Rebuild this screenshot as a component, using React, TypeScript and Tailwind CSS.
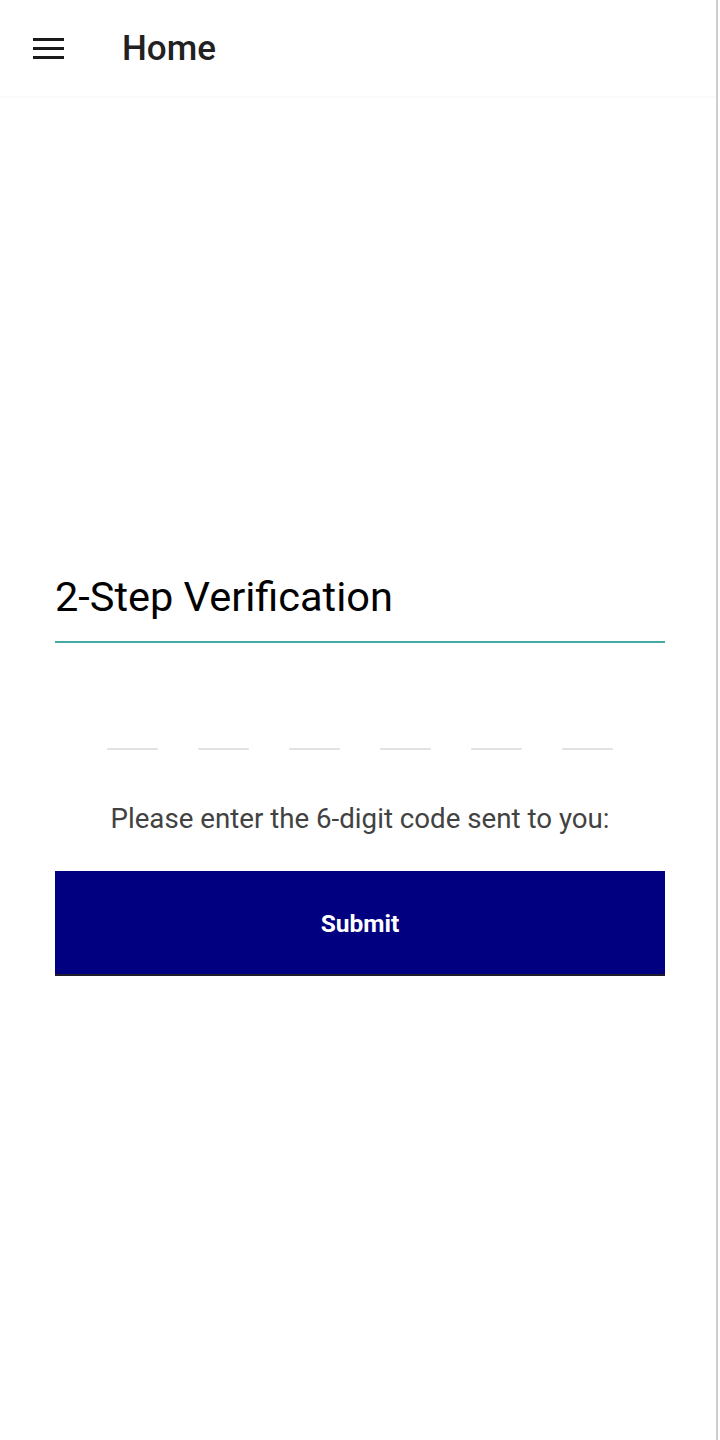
import React from 'react';

const App = () => {
  const digits = [0, 1, 2, 3, 4, 5];

  return (
    <div className="flex h-[1440px] w-[720px] bg-white font-['Roboto',sans-serif]">
      <div className="flex h-full w-[716px] flex-col bg-white">
        {/* top bar */}
        <div className="flex h-[96px] items-center bg-white shadow-[0_1px_3px_rgba(0,0,0,0.04)]">
          <div className="ml-[33px] flex w-[31px] flex-col gap-[6px] pt-[1px]">
            <div className="h-[3px] bg-[#1a1a1a]" />
            <div className="h-[3px] bg-[#1a1a1a]" />
            <div className="h-[3px] bg-[#1a1a1a]" />
          </div>
          <h1 className="ml-[58px] pt-[2px] text-[35px] font-medium text-[#212121]">Home</h1>
        </div>

        {/* form */}
        <div className="ml-[55px] mt-[476px] w-[610px]">
          <div className="border-b-2 border-[#45aaa3] pb-[19px]">
            <h2 className="text-[41.5px] leading-[50px] text-black">2-Step Verification</h2>
          </div>

          <div className="mt-[105px] flex justify-center gap-[40px]">
            {digits.map((d) => (
              <div key={d} className="h-[2px] w-[51px] rounded-full bg-[#e2e2e2]" />
            ))}
          </div>

          <p className="mt-[52px] text-center text-[27.7px] leading-[34px] text-[#424242]">
            Please enter the 6-digit code sent to you:
          </p>

          <button className="mt-[35px] flex h-[105px] w-full items-center justify-center border-b-2 border-[#1c1c2a] bg-[#000080] pt-[4px] text-[24.5px] font-bold text-white">
            Submit
          </button>
        </div>
      </div>
      <div className="h-full w-[2px] bg-[#cfcfcf]" />
    </div>
  );
};

export default App;
